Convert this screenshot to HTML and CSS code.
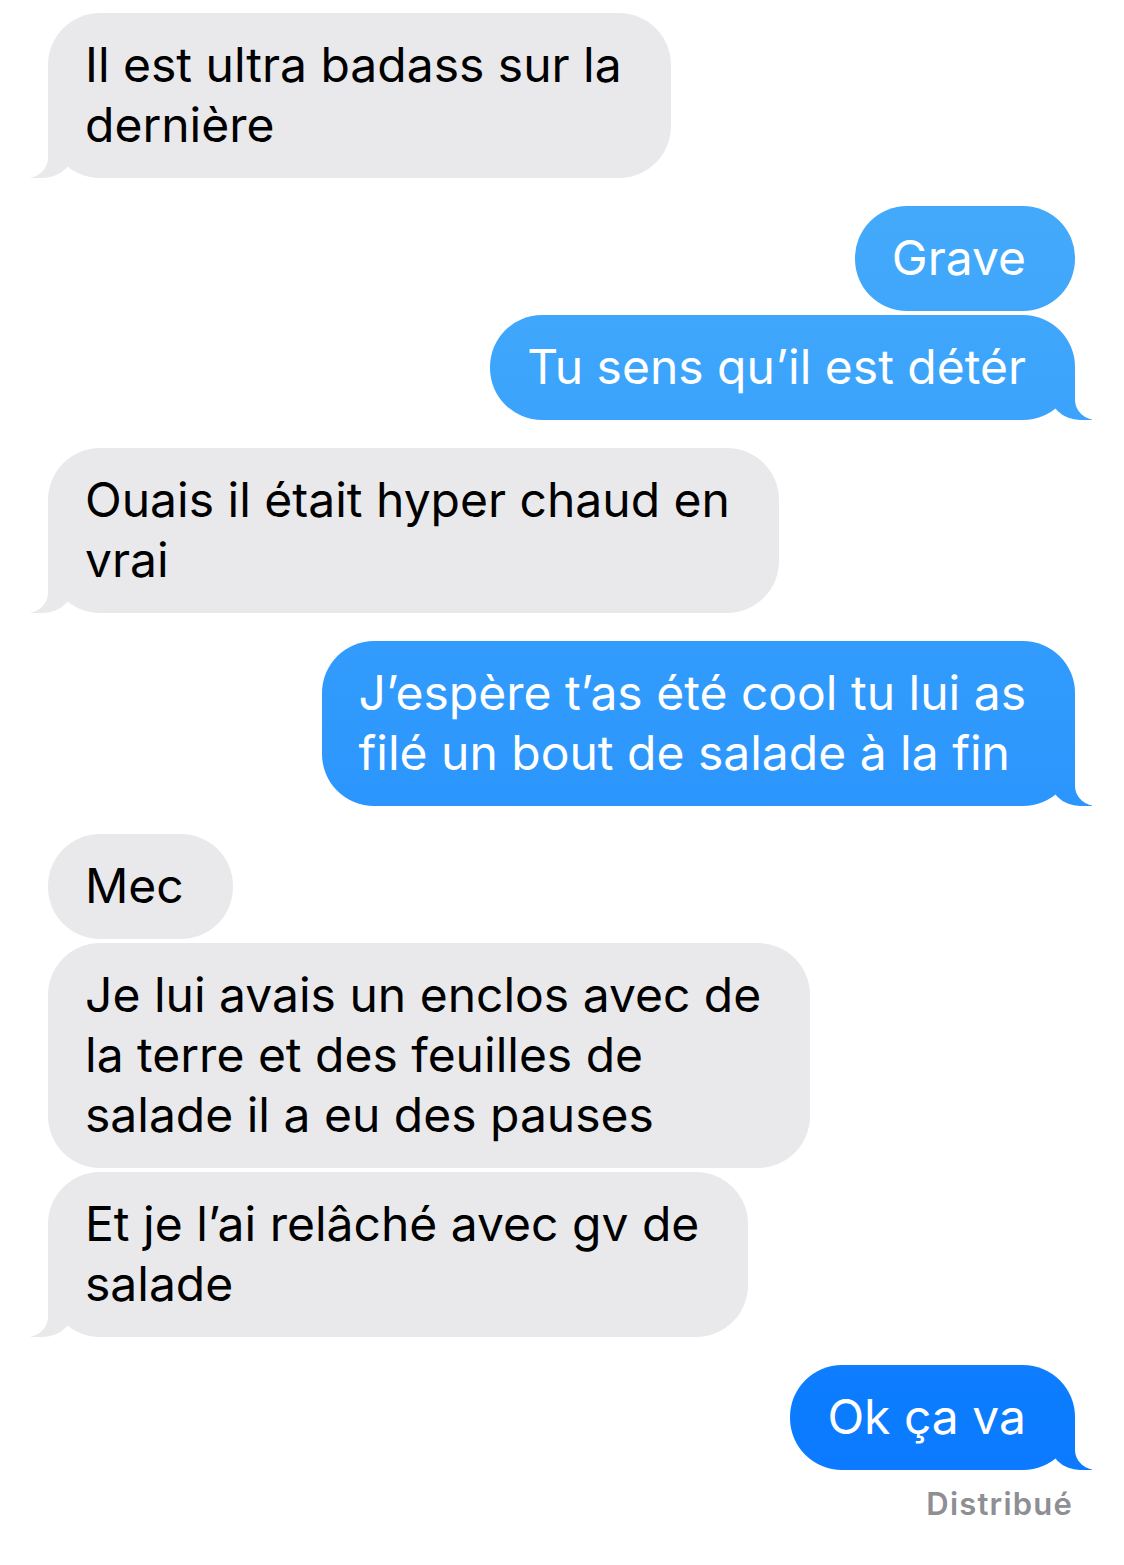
FILE: index.html
```
<!DOCTYPE html>
<html lang="fr">
<head>
    <meta charset="UTF-8">
    <meta name="viewport" content="width=device-width, initial-scale=1.0">
    <title>Messages</title>
    <link rel="stylesheet" href="styles.css">
</head>
<body>
    <div class="chat">
        <!-- them -->
        <div class="group">
            <div class="bubble them tail">Il est ultra badass sur la<br>dernière</div>
        </div>

        <!-- me -->
        <div class="group">
            <div class="bubble me">Grave</div>
            <div class="bubble me tail">Tu sens qu’il est détér</div>
        </div>

        <div class="group">
            <div class="bubble them tail">Ouais il était hyper chaud en<br>vrai</div>
        </div>

        <div class="group">
            <div class="bubble me tail">J’espère t’as été cool tu lui as<br>filé un bout de salade à la fin</div>
        </div>

        <div class="group">
            <div class="bubble them">Mec</div>
            <div class="bubble them">Je lui avais un enclos avec de<br>la terre et des feuilles de<br>salade il a eu des pauses</div>
            <div class="bubble them tail">Et je l’ai relâché avec gv de<br>salade</div>
        </div>

        <div class="group">
            <div class="bubble me tail">Ok ça va</div>
            <div class="status">Distribué</div>
        </div>
    </div>
</body>
</html>
```

FILE: styles.css
```
body {
    margin: 0;
    background-color: #fff;
    font-family: Inter, "Liberation Sans", sans-serif;
}
.chat {
    display: flex;
    flex-direction: column;
    gap: 28px;
    padding: 13px 49px 40px 48px;
}
.group {
    display: flex;
    flex-direction: column;
    gap: 4px;
}
.bubble {
    position: relative;
    z-index: 0;
    width: fit-content;
    padding: 22px 49px 23px 37px;
    border-radius: 52px;
    font-size: 48px;
    line-height: 60px;
    white-space: nowrap;
}
.them {
    align-self: flex-start;
    background-color: #e9e9eb;
    color: #000;
}
.me {
    align-self: flex-end;
    color: #fff;
}
.me, .me.tail::before {
    background: linear-gradient(to bottom, #48aefa 0%, #41a8fb 17%, #2f99fd 46%, #0c7cff 90%, #0a78ff 100%);
    background-attachment: fixed;
}
.tail::before, .tail::after {
    content: "";
    position: absolute;
    bottom: 0;
    z-index: -1;
    height: 50px;
}
.them.tail::before {
    left: -17px;
    width: 44px;
    background-color: #e9e9eb;
    border-bottom-right-radius: 32px;
}
.them.tail::after {
    left: -22px;
    width: 22px;
    background-color: #fff;
    border-bottom-right-radius: 22px 20px;
}
.me.tail::before {
    right: -17px;
    width: 44px;
    border-bottom-left-radius: 32px;
}
.me.tail::after {
    right: -22px;
    width: 22px;
    background-color: #fff;
    border-bottom-left-radius: 22px 20px;
}
.status {
    align-self: flex-end;
    margin: 12px 2px 0 0;
    font-size: 31px;
    line-height: 36px;
    font-weight: 600;
    letter-spacing: 1.2px;
    color: #8e8e93;
}
```
